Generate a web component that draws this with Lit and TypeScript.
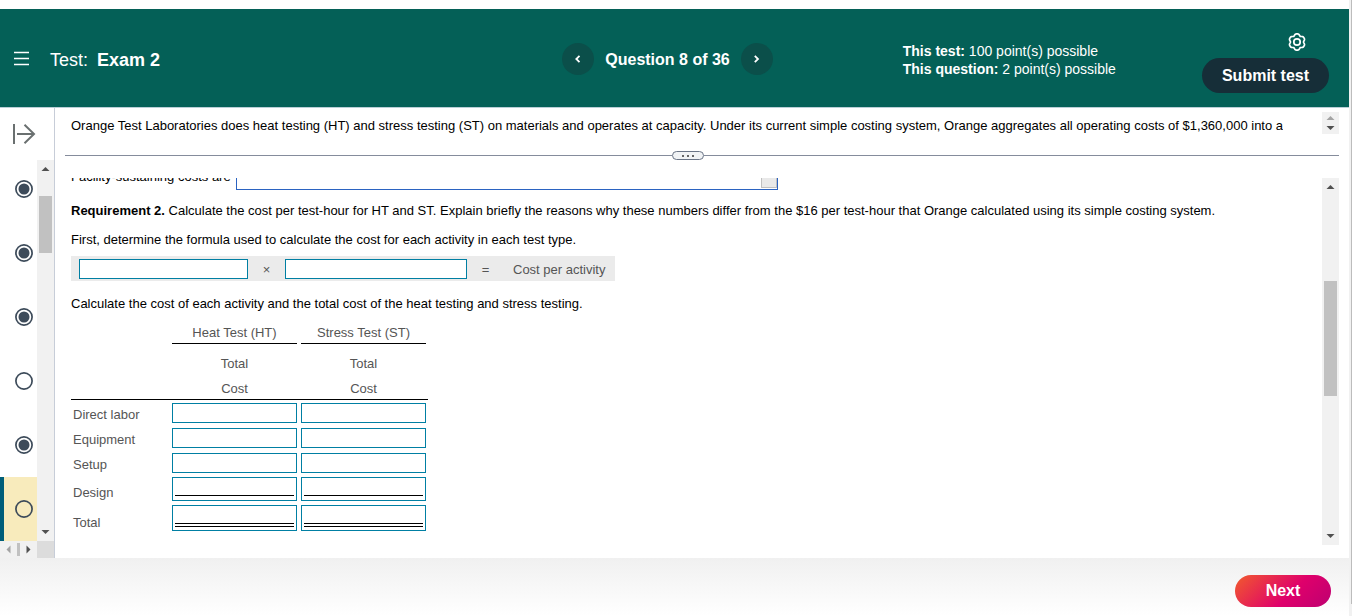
import { LitElement, html, css, svg } from "lit";
import { customElement, property } from "lit/decorators.js";

@customElement("scroll-arrow")
class ScrollArrow extends LitElement {
  @property() dir = "up";
  @property({ type: Boolean }) muted = false;
  static styles = css`
    :host { display: block; width: 9px; height: 9px; line-height: 0; color: #505050; }
    :host([muted]) { color: #a3a3a3; }
    svg { display: block; }
  `;
  render() {
    const shapes: Record<string, string> = {
      up: "M0.5 7L4.5 3L8.5 7Z",
      down: "M0.5 3L4.5 7L8.5 3Z",
      left: "M6.5 0.5L2.5 4.5L6.5 8.5Z",
      right: "M2.5 0.5L6.5 4.5L2.5 8.5Z",
    };
    return html`<svg width="9" height="9" viewBox="0 0 9 9" aria-hidden="true"><path fill="currentColor" d=${shapes[this.dir]}></path></svg>`;
  }
}

@customElement("question-status")
class QuestionStatus extends LitElement {
  @property({ type: Boolean }) answered = false;
  static styles = css`
    :host { display: block; width: 18px; height: 18px; }
    svg { display: block; }
  `;
  render() {
    return html`<svg width="18" height="18" viewBox="0 0 18 18" aria-hidden="true">
      <circle cx="9" cy="9" r="8.1" fill="#fff" fill-opacity=${this.answered ? 1 : 0} stroke="#3d4b5a" stroke-width="1.7"></circle>
      ${this.answered ? svg`<circle cx="9" cy="9" r="5.5" fill="#3d4b5a"></circle>` : ""}
    </svg>`;
  }
}

// Outline of a gear with six rounded teeth, one of them pointing straight up.
function gearOutline(): string {
  const points: string[] = [];
  for (let deg = 0; deg < 360; deg += 5) {
    const a = (deg * Math.PI) / 180;
    const wave = Math.cos(6 * a);
    const r = 7.5 + 0.8 * wave - 0.2 * Math.cos(12 * a);
    points.push(`${(10 + r * Math.sin(a)).toFixed(2)} ${(10 - r * Math.cos(a)).toFixed(2)}`);
  }
  return `M${points.join("L")}Z`;
}

@customElement("app-root")
class AppRoot extends LitElement {
  questions = [
    { n: 3, answered: true },
    { n: 4, answered: true },
    { n: 5, answered: true },
    { n: 6, answered: false },
    { n: 7, answered: true },
    { n: 8, answered: false, current: true },
  ];

  rows = [
    { label: "Direct labor", kind: "" },
    { label: "Equipment", kind: "" },
    { label: "Setup", kind: "" },
    { label: "Design", kind: "sum" },
    { label: "Total", kind: "total" },
  ];

  static styles = css`
    :host {
      display: flex;
      height: 100vh;
      background: #fff;
      color: #000;
      font: 13px/18px "Liberation Sans", Arial, sans-serif;
    }
    * { box-sizing: border-box; }
    button { font: inherit; border: 0; padding: 0; cursor: pointer; background: none; color: inherit; }
    input, select { font: inherit; border-radius: 0; margin: 0; outline: none; }
    p { margin: 0; }
    .page { flex: 1; min-width: 0; display: flex; flex-direction: column; padding-top: 9px; }
    .edge { width: 3px; background: #f1f1f1; }
    .edge-thumb { height: 98%; width: 1px; margin-left: 2px; background: #bcbcbc; }

    .header {
      display: grid;
      grid-template-columns: 1fr auto 1fr;
      align-items: center;
      height: 99px;
      padding: 0 20px 0 14px;
      background: #046057;
      border-bottom: 1px solid #b9cfd6;
      color: #fff;
    }
    .brand { display: flex; align-items: center; gap: 20px; font-size: 18px; }
    .brand h1 { margin: 0; font-size: 18px; font-weight: 400; padding-top: 3px; }
    .brand strong { margin-left: 4px; }
    .menu { width: 16px; height: 16px; }
    .pager { display: flex; align-items: center; gap: 11px; padding: 2px 8px 0 0; font-size: 16px; font-weight: 700; }
    .pager span { padding-top: 2px; }
    .round { width: 32px; height: 32px; border-radius: 50%; background: #0b4f4a; display: flex; align-items: center; justify-content: center; }
    .info { display: flex; align-items: center; justify-content: space-between; padding-left: 122px; }
    .points { font-size: 14px; padding-top: 4px; }
    .actions { display: flex; flex-direction: column; align-items: flex-end; gap: 6px; padding-top: 8px; }
    .gear { width: 20px; height: 20px; margin-right: 22px; }
    .gear svg, .menu svg { display: block; }
    .submit { width: 127px; height: 35px; padding-top: 2px; border-radius: 18px; background: #162e38; font-size: 16px; font-weight: 700; }

    .body { flex: 1; min-height: 0; display: flex; }
    .side { width: 55px; border-right: 1px solid #c7cdd8; display: flex; flex-direction: column; }
    .toggle { height: 52px; width: 100%; padding: 0 0 0 12px; }
    .toggle svg { display: block; }
    .list-row { flex: 1; min-height: 0; display: flex; }
    .list { flex: 1; display: flex; flex-direction: column; justify-content: flex-end; overflow: hidden; }
    .item { flex: none; height: 64px; display: flex; align-items: center; padding-left: 15px; }
    .item.current { background: #f8ebbc; border-left: 4px solid #005e79; padding-left: 11px; }
    .bar { width: 17px; flex: none; background: #f1f1f1; display: flex; flex-direction: column; align-items: center; padding: 4px 0 5px; }
    .track { flex: 1; width: 13px; display: flex; flex-direction: column; }
    .thumb { background: #c1c1c1; width: 100%; }
    .lead-side { flex: 23; }
    .thumb-side { flex: 57; }
    .rest-side { flex: 274; }
    .foot-row { display: flex; height: 17px; flex: none; }
    .hbar { flex: 1; background: #f1f1f1; display: flex; align-items: center; justify-content: space-between; padding: 0 4px; }
    .hthumb { width: 3px; height: 13px; background: #c1c1c1; }
    .corner { width: 17px; background: #dcdcdc; }

    .main { flex: 1; min-width: 0; display: flex; flex-direction: column; padding: 4px 10px 13px 10px; }
    .intro { display: flex; justify-content: space-between; height: 39px; padding-left: 6px; }
    .intro p { padding-top: 5px; white-space: nowrap; overflow: hidden; height: 26px; }
    .stepper { width: 17px; height: 22px; flex: none; background: #f1f1f1; display: flex; flex-direction: column; align-items: center; justify-content: space-between; padding: 1px 0 2px; }
    .splitter { display: flex; align-items: center; height: 9px; }
    .splitter::before, .splitter::after { content: ""; flex: 1; height: 1px; background: #858c9c; }
    .splitter::before { flex: 607; }
    .splitter::after { flex: 635; }
    .grip { width: 32px; height: 9px; border: 1px solid #6a7486; border-radius: 5px; background: #f1f3f5; display: flex; align-items: center; justify-content: center; gap: 3px; }
    .grip i { width: 2px; height: 2px; background: #666; }
    .pane { flex: 1; min-height: 0; margin-top: 18px; display: flex; }
    .content { flex: 1; min-width: 0; display: flex; flex-direction: column; justify-content: flex-end; overflow: hidden; padding: 0 6px 12px; }
    .content > * { flex: none; }
    .lead-main { flex: 90; }
    .thumb-main { flex: 115; }
    .rest-main { flex: 135; }

    .facility { display: flex; align-items: center; gap: 5px; height: 26px; }
    .pick { position: relative; width: 542px; height: 26px; }
    .pick select { appearance: none; width: 100%; height: 100%; border: 1px solid #2b63c1; background: #fff; }
    .drop { position: absolute; right: 1px; bottom: 2px; width: 16px; height: 18px; background: #e9e9e9; border: 1px solid #c0c0c0; border-top: 0; pointer-events: none; display: flex; justify-content: center; }
    .requirement { margin-top: 12px; }
    .first { margin-top: 11px; }
    .formula { margin-top: 7px; align-self: flex-start; display: flex; align-items: center; height: 25px; padding: 1px 10px 0 8px; background: #ebebeb; color: #555; }
    .formula input, .plain input { height: 20px; border: 1px solid #007fa3; background: #fff; padding: 0 4px; display: block; }
    .formula span { padding-top: 2px; }
    .factor-a { width: 169px; }
    .factor-b { width: 182px; }
    .times { width: 37px; text-align: center; }
    .equals { width: 37px; text-align: center; }
    .result { margin-left: 9px; }
    .calculate { margin-top: 14px; }
    table { margin-top: 7px; width: 357px; border-collapse: separate; border-spacing: 0; table-layout: fixed; color: #555; }
    th { font-weight: 400; padding: 0 2px; }
    td { padding: 2px; vertical-align: top; }
    .label-col { width: 99px; }
    .group { height: 24px; line-height: 25px; border-bottom: 1px solid #000; }
    .sub th { padding-top: 7px; line-height: 25px; height: 32px; }
    .unit th { height: 24px; line-height: 21px; padding-top: 2px; border-bottom: 1px solid #000; }
    tbody th { text-align: left; vertical-align: bottom; line-height: 16px; padding: 0 2px 2px; }
    .plain td { padding: 3px 2px 2px; }
    .box { border: 1px solid #007fa3; padding: 0 2px; }
    .box input { display: block; width: 100%; border: 0; border-bottom: 1px solid #000; background: transparent; padding: 0 2px; }
    .plain input { width: 100%; }
    .sum .box { height: 24px; }
    .sum input { height: 18px; }
    .total .box { height: 26px; }
    .total input { height: 21px; border-bottom: 4px double #000; }

    .footer { height: 58px; flex: none; display: flex; justify-content: flex-end; align-items: flex-start; padding: 17px 18px 0; background: linear-gradient(#f0f0f0, #fff); }
    .next { width: 96px; height: 32px; border-radius: 16px; color: #fff; font-size: 16px; font-weight: 700; background: linear-gradient(135deg, #f05332 5%, #df006b 58%, #bd0071); }
  `;

  cell(row: { label: string; kind: string }, test: string) {
    const field = html`<input type="text" aria-label="${row.label}, ${test}" />`;
    return html`<td>${row.kind ? html`<div class="box">${field}</div>` : field}</td>`;
  }

  render() {
    return html`
      <div class="page">
        <header class="header">
          <div class="brand">
            <button class="menu" aria-label="Menu">
              <svg width="16" height="16" viewBox="0 0 16 16" stroke="#fff" stroke-width="1.6" aria-hidden="true"><path d="M0 2.500h15M0 8.500h15M0 14.500h15"></path></svg>
            </button>
            <h1>Test: <strong>Exam 2</strong></h1>
          </div>
          <nav class="pager">
            <button class="round" aria-label="Previous question">
              <svg width="8" height="10" viewBox="0 0 8 10" fill="none" stroke="#fff" stroke-width="1.8" aria-hidden="true"><path d="M5.500 1.800L2.300 5L5.500 8.200"></path></svg>
            </button>
            <span>Question 8 of 36</span>
            <button class="round" aria-label="Next question">
              <svg width="8" height="10" viewBox="0 0 8 10" fill="none" stroke="#fff" stroke-width="1.8" aria-hidden="true"><path d="M1.800 1.800L5 5L1.800 8.200"></path></svg>
            </button>
          </nav>
          <div class="info">
            <div class="points">
              <p><strong>This test:</strong> 100 point(s) possible</p>
              <p><strong>This question:</strong> 2 point(s) possible</p>
            </div>
            <div class="actions">
              <button class="gear" aria-label="Settings">
                <svg width="20" height="20" viewBox="0 0 20 20" fill="none" stroke="#fff" stroke-width="1.7" stroke-linejoin="round" aria-hidden="true">
                  <path d=${gearOutline()}></path>
                  <circle cx="10" cy="10" r="3.200"></circle>
                </svg>
              </button>
              <button class="submit">Submit test</button>
            </div>
          </div>
        </header>

        <div class="body">
          <aside class="side">
            <button class="toggle" aria-label="Expand question list">
              <svg width="24" height="20" viewBox="0 0 24 20" fill="none" stroke="#6a7070" stroke-width="2" aria-hidden="true"><path d="M2 0v20M5 10h17M12.500 0.800L22 10L12.500 19.200"></path></svg>
            </button>
            <div class="list-row">
              <nav class="list">
                ${this.questions.map(
                  (q) => html`<button class="item ${q.current ? "current" : ""}" aria-label="Question ${q.n}">
                    <question-status ?answered=${q.answered}></question-status>
                  </button>`
                )}
              </nav>
              <div class="bar">
                <scroll-arrow dir="up"></scroll-arrow>
                <div class="track"><div class="lead-side"></div><div class="thumb thumb-side"></div><div class="rest-side"></div></div>
                <scroll-arrow dir="down"></scroll-arrow>
              </div>
            </div>
            <div class="foot-row">
              <div class="hbar"><scroll-arrow dir="left" muted></scroll-arrow><div class="hthumb"></div><scroll-arrow dir="right"></scroll-arrow></div>
              <div class="corner"></div>
            </div>
          </aside>

          <main class="main">
            <div class="intro">
              <p>Orange Test Laboratories does heat testing (HT) and stress testing (ST) on materials and operates at capacity. Under its current simple costing system, Orange aggregates all operating costs of $1,360,000 into a</p>
              <div class="stepper"><scroll-arrow dir="up" muted></scroll-arrow><scroll-arrow dir="down"></scroll-arrow></div>
            </div>
            <div class="splitter"><button class="grip" aria-label="Resize panes"><i></i><i></i><i></i></button></div>
            <div class="pane">
              <div class="content">
                <div class="facility">
                  <label for="facility">Facility-sustaining costs are</label>
                  <div class="pick">
                    <select id="facility"></select>
                    <span class="drop"><scroll-arrow dir="down"></scroll-arrow></span>
                  </div>
                </div>
                <p class="requirement"><strong>Requirement 2.</strong> Calculate the cost per test-hour for HT and ST. Explain briefly the reasons why these numbers differ from the $16 per test-hour that Orange calculated using its simple costing system.</p>
                <p class="first">First, determine the formula used to calculate the cost for each activity in each test type.</p>
                <div class="formula">
                  <input class="factor-a" type="text" aria-label="First factor" />
                  <span class="times">×</span>
                  <input class="factor-b" type="text" aria-label="Second factor" />
                  <span class="equals">=</span>
                  <span class="result">Cost per activity</span>
                </div>
                <p class="calculate">Calculate the cost of each activity and the total cost of the heat testing and stress testing.</p>
                <table>
                  <colgroup><col class="label-col" /><col /><col /></colgroup>
                  <thead>
                    <tr><td rowspan="2"></td><th scope="col"><div class="group">Heat Test (HT)</div></th><th scope="col"><div class="group">Stress Test (ST)</div></th></tr>
                    <tr class="sub"><th>Total</th><th>Total</th></tr>
                    <tr class="unit"><th></th><th>Cost</th><th>Cost</th></tr>
                  </thead>
                  <tbody>
                    ${this.rows.map(
                      (r) => html`<tr class=${r.kind || "plain"}>
                        <th scope="row">${r.label}</th>
                        ${this.cell(r, "Heat Test (HT)")}${this.cell(r, "Stress Test (ST)")}
                      </tr>`
                    )}
                  </tbody>
                </table>
              </div>
              <div class="bar">
                <scroll-arrow dir="up"></scroll-arrow>
                <div class="track"><div class="lead-main"></div><div class="thumb thumb-main"></div><div class="rest-main"></div></div>
                <scroll-arrow dir="down"></scroll-arrow>
              </div>
            </div>
          </main>
        </div>

        <footer class="footer"><button class="next">Next</button></footer>
      </div>
      <div class="edge"><div class="edge-thumb"></div></div>
    `;
  }
}
